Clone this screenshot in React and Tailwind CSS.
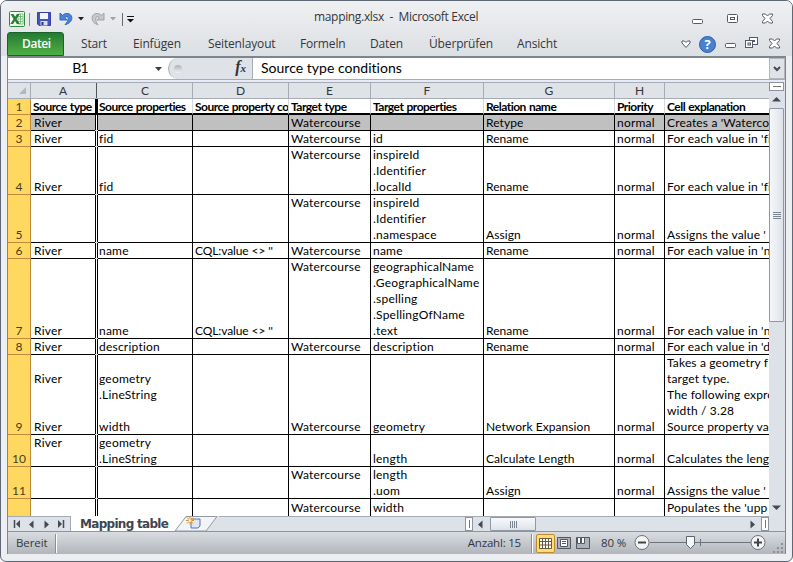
import React from "react";

const COLS = [
  ["A", "w-[64px]"],
  ["C", "w-[95px]"],
  ["D", "w-[96px]"],
  ["E", "w-[82px]"],
  ["F", "w-[113px]"],
  ["G", "w-[131px]"],
  ["H", "w-[50px]"],
  ["", "w-[104px]"],
];

const W = "Watercourse";
const ROWS = [
  { n: "2", h: "h-[16px]", gray: true, c: ["River", "", "", W, "", "Retype", "normal", "Creates a 'Waterco"] },
  { n: "3", h: "h-[16px]", c: ["River", "fid", "", W, "id", "Rename", "normal", "For each value in 'fid'"] },
  { n: "4", h: "h-[48px]", c: ["River", "fid", "", W + "\n\n ", "inspireId\n.Identifier\n.localId", "Rename", "normal", "For each value in 'fid'"] },
  { n: "5", h: "h-[48px]", c: ["", "", "", W + "\n\n ", "inspireId\n.Identifier\n.namespace", "Assign", "normal", "Assigns the value '"] },
  { n: "6", h: "h-[16px]", c: ["River", "name", "CQL:value <> ''", W, "name", "Rename", "normal", "For each value in 'name'"] },
  { n: "7", h: "h-[80px]", c: ["River", "name", "CQL:value <> ''", W + "\n\n\n\n ", "geographicalName\n.GeographicalName\n.spelling\n.SpellingOfName\n.text", "Rename", "normal", "For each value in 'name'"] },
  { n: "8", h: "h-[16px]", c: ["River", "description", "", W, "description", "Rename", "normal", "For each value in 'description'"] },
  { n: "9", h: "h-[80px]", c: ["River\n\n\nRiver", "geometry\n.LineString\n\nwidth", "", W, "geometry", "Network Expansion", "normal", "Takes a geometry f\ntarget type.\nThe following expression\nwidth / 3.28\nSource property var"] },
  { n: "10", h: "h-[32px]", c: ["River\n ", "geometry\n.LineString", "", "", "length", "Calculate Length", "normal", "Calculates the leng"] },
  { n: "11", h: "h-[32px]", c: ["", "", "", W + "\n ", "length\n.uom", "Assign", "normal", "Assigns the value '"] },
  { n: "", h: "h-[17px]", last: true, c: ["", "", "", W, "width", "", "", "Populates the 'upp"] },
];

const HEADS = ["Source type", "Source properties", "Source property conditions", "Target type", "Target properties", "Relation name", "Priority", "Cell explanation"];

function cellPad(i) {
  if (i === 0) return "pl-[3px]";
  if (i === 1) return "pl-[1px]";
  return "pl-[2px]";
}

function cellSpacing(i) {
  if (i === 2) return "tracking-[-0.1px]";
  if (i === 5) return "tracking-[0.06px]";
  if (i === 7) return "tracking-[0.15px]";
  return "tracking-[0.22px]";
}

function Row({ row }) {
  const line = row.last ? "" : "border-b border-b-black";
  return (
    <div className={`flex shrink-0 ${row.h}`}>
      <div className={`flex w-[23px] shrink-0 items-end justify-center border-r border-[#c08a3c] bg-[#ffd95f] text-[12px] leading-[15px] text-[#4a3c20] ${row.last ? "" : "border-b"}`}>{row.n}</div>
      {COLS.map(([, w], i) => (
        <React.Fragment key={i}>
          <div className={`flex shrink-0 items-end overflow-hidden ${w} ${line} ${cellPad(i)} ${i > 0 && i < 7 ? "border-r border-r-black" : ""} ${row.gray ? "bg-[#c0c0c0]" : "bg-white"}`}>
            <div className={`whitespace-pre text-[12px] leading-[16px] ${cellSpacing(i)} ${row.last ? "" : "-mb-px"}`}>{row.c[i]}</div>
          </div>
          {i === 0 && <div className={`w-[3px] shrink-0 border-x border-black bg-white ${row.last ? "" : "mb-px"}`} />}
        </React.Fragment>
      ))}
    </div>
  );
}

function ExcelLogo() {
  return (
    <svg width="16" height="16" viewBox="0 0 16 16">
      <rect x=".5" y=".5" width="15" height="15" rx="1" fill="#f3f8f0" stroke="#2f8a3b" />
      <path d="M9 3h5v10H9z" fill="#fff" stroke="#5ba85e" strokeWidth=".7" />
      <path d="M9 5.500h5M9 8h5M9 10.500h5M11.500 3v10" stroke="#5ba85e" strokeWidth=".7" />
      <path d="M1.500 3h3l1.600 2.800L7.900 3h2.800L7.600 8l3.300 5H7.800L6 10l-1.900 3H1.300l3.200-5z" fill="#2b7f36" />
    </svg>
  );
}

const Close = ({ className = "" }) => (
  <svg width="13" height="11" viewBox="0 0 13 11" className={className}>
    <path d="M1.500 1h3l2 2 2-2h3v1.500L9 5.500l2.500 3V10h-3l-2-2-2 2h-3V8.500L4 5.500 1.500 2.500z" fill="#fff" stroke="#555b66" />
  </svg>
);
const Minus = () => (
  <svg width="11" height="5" viewBox="0 0 11 5"><rect x=".5" y=".5" width="10" height="4" rx="1" fill="#fff" stroke="#555b66" /></svg>
);
const Tri = ({ d, className = "" }) => (
  <svg width="9" height="9" viewBox="0 0 9 9" className={className}><path d={d} fill="currentColor" /></svg>
);
const LEFT = "M6.500 .5v8L2 4.500z";
const RIGHT = "M2.500 .5v8L7 4.500z";
const DOWN = "M0 2.500h9L4.500 7z";
const UP = "M0 6.500h9L4.500 2z";

function TitleBar() {
  return (
    <div className="flex h-[31px] shrink-0 items-start pl-[2px] pt-[10px] text-[#33373d]">
      <div className="flex w-[305px] shrink-0 items-center">
        <ExcelLogo />
        <div className="ml-[4px] h-[13px] w-px bg-[#8b9097]" />
        <svg className="ml-[7px]" width="14" height="14" viewBox="0 0 14 14">
          <path d="M.5 .5h13v13H2L.5 12z" fill="#4354bd" stroke="#3542a0" />
          <path d="M3 1h8v6H3z" fill="#f4f6fc" /><path d="M3.500 9h7v4.500h-7z" fill="#d8dcec" /><path d="M4.500 10h2v3h-2z" fill="#27327c" />
        </svg>
        <svg className="ml-[8px]" width="14" height="14" viewBox="0 0 14 14">
          <path d="M1 1v7h7L5.800 5.500C7.500 4 9.200 4.500 9.200 6.500c0 2-1.200 4-3.200 6.200C11 11.500 13.200 8.500 12.800 5.200 12 1 6.500.3 3.500 3.300z" fill="#4a83dc" stroke="#3468bd" strokeWidth="1" />
        </svg>
        <svg className="ml-[5px]" width="6" height="4"><path d="M0 0h6L3 3.500z" fill="#222" /></svg>
        <svg className="ml-[7px]" width="14" height="14" viewBox="0 0 14 14">
          <path d="M13 1v7H6l2.200-2.500C6.500 4 4.800 4.500 4.800 6.500c0 2 .2 4 2.200 6.200C2.500 11.500.8 8.500 1.200 5.200 2 1 7.500.3 10.500 3.300z" fill="#c6c8ca" stroke="#a0a4a8" strokeWidth="1" />
        </svg>
        <svg className="ml-[5px]" width="6" height="4"><path d="M0 0h6L3 3.500z" fill="#a0a3a7" /></svg>
        <div className="ml-[6px] h-[13px] w-px bg-[#666b72]" />
        <svg className="ml-[4px]" width="7" height="8"><path d="M0 1.500h7" stroke="#111" /><path d="M0 4h7L3.500 7.500z" fill="#111" /></svg>
      </div>
      <div className="-mt-[2px] w-[376px] shrink-0 whitespace-pre font-['Open_Sans',sans-serif] text-[12px] leading-[16px] tracking-[-0.33px]">mapping.xlsx  -  Microsoft Excel</div>
      <div className="flex items-center pl-[2px] pt-[3px]">
        <div className="pt-[4px]"><Minus /></div>
        <svg className="ml-[24px]" width="11" height="10" viewBox="0 0 11 10"><rect x=".5" y=".5" width="10" height="8" rx="1" fill="#fff" stroke="#555b66" /><rect x="3.500" y="3.500" width="4" height="2" fill="#fff" stroke="#555b66" /></svg>
        <Close className="ml-[23px] -mt-[2px]" />
      </div>
    </div>
  );
}

function Ribbon() {
  return (
    <div className="flex h-[24px] shrink-0 font-['Open_Sans',sans-serif] text-[12px] leading-[24px] tracking-[-0.15px] text-[#33373d]">
      <div className="mr-[17px] w-[57px] rounded-t-[3px] border border-[#19622a] bg-linear-to-b from-[#257b32] to-[#4eb046] pl-[14px] font-semibold leading-[22px] tracking-[-0.4px] text-white">Datei</div>
      <div className="flex">
        <div className="w-[52px]">Start</div>
        <div className="w-[75px]">Einfügen</div>
        <div className="w-[92px]">Seitenlayout</div>
        <div className="w-[70px]">Formeln</div>
        <div className="w-[59px]">Daten</div>
        <div className="w-[88px]">Überprüfen</div>
        <div className="w-[164px]">Ansicht</div>
      </div>
      <div className="flex items-center">
        <svg width="10" height="9" viewBox="0 0 10 9"><path d="M1 1h2.500L5 2.500 6.500 1H9v2L5 7.500 1 3z" fill="#fff" stroke="#555b66" /></svg>
        <div className="ml-[8px] flex size-[17px] items-center justify-center rounded-full border border-[#2e5ea8] bg-[#4a80d0] text-[13px] font-bold text-white">?</div>
        <div className="ml-[9px] pt-[3px] leading-none"><Minus /></div>
        <svg className="ml-[9px] -mt-[2px]" width="13" height="12" viewBox="0 0 13 12"><rect x="4.500" y=".5" width="8" height="7" fill="#fff" stroke="#555b66" /><rect x="7.500" y="3.500" width="2" height="1" fill="#fff" stroke="#555b66" /><rect x=".5" y="3.500" width="7" height="7" fill="#fff" stroke="#555b66" /><rect x="3" y="6" width="2.500" height="2" fill="#fff" stroke="#555b66" /></svg>
        <Close className="ml-[10px] -mt-[2px]" />
      </div>
    </div>
  );
}

function FormulaBar() {
  return (
    <div className="flex h-[22px] shrink-0 border-b border-[#a6acb4] bg-white text-[14px] leading-[20px]">
      <div className="flex w-[160px] items-center justify-end">
        <span className="mr-[66px] -mt-px tracking-[-0.7px]">B1</span>
        <Tri d="M1 3h7L4.500 7z" className="mr-[5px] text-[#3a3e45]" />
      </div>
      <div className="flex w-[84px] items-center justify-between rounded-l-[11px] border-l border-[#a6acb4] bg-[#dfe2e7] pl-[5px] pr-[6px]">
        <div className="size-[8px] rounded-full bg-linear-to-b from-[#adb2b9] to-[#f0f2f4]" />
        <span className="-mt-[2px] font-['Liberation_Serif',serif] text-[16px] font-bold italic text-[#333]">f<span className="text-[11px]">x</span></span>
      </div>
      <div className="flex-1 border-l border-[#a6acb4] pl-[8px]"><span className="tracking-[0.02px]">Source type conditions</span></div>
      <div className="flex w-[16px] items-center justify-center border border-[#b2b7be] bg-[#dfe2e7] text-[#454a52]">
        <svg width="8" height="6"><path d="M1 1l3 3 3-3" fill="none" stroke="currentColor" strokeWidth="2" /></svg>
      </div>
    </div>
  );
}

function Sheet() {
  return (
    <div className="flex h-[434px] shrink-0">
      <div className="flex w-[761px] flex-col overflow-hidden">
        <div className="flex h-[17px] shrink-0 border-t border-b border-[#a6acb4] bg-[#dfe2e7] text-[12px] leading-[16px] text-[#33373d]">
          <div className="flex w-[23px] shrink-0 items-end justify-end border-r border-[#a6acb4] p-[4px]"><svg width="7" height="7"><path d="M7 0v7H0z" fill="#b3b8c0" /></svg></div>
          {COLS.map(([l, w], i) => (
            <React.Fragment key={i}>
              <div className={`shrink-0 text-center ${w} ${i && i < 7 ? "border-r border-[#a6acb4]" : ""}`}>{l}</div>
              {i === 0 && <div className="flex w-[3px] shrink-0 justify-center"><div className="w-px bg-[#50555c]" /></div>}
            </React.Fragment>
          ))}
        </div>
        <div className="flex h-[16px] shrink-0">
          <div className="w-[23px] shrink-0 border-r border-b border-[#c08a3c] bg-[#ffd95f] text-center text-[12px] leading-[16px] text-[#4a3c20]">1</div>
          {COLS.map(([, w], i) => (
            <React.Fragment key={i}>
              <div className={`shrink-0 overflow-hidden border-b-2 border-b-black bg-white whitespace-nowrap text-[12px] font-bold leading-[16px] tracking-[-0.5px] [word-spacing:0.7px] ${w} ${i === 1 ? "pl-[1px]" : "pl-[2px]"} ${i && i < 7 ? "border-r border-r-[#d4d7dc]" : ""}`}>{HEADS[i]}</div>
              {i === 0 && <div className="w-[3px] shrink-0 bg-black" />}
            </React.Fragment>
          ))}
        </div>
        {ROWS.map((r, i) => <Row key={i} row={r} />)}
      </div>
      <div className="flex w-[15px] flex-col items-center bg-[#dde1e8] text-[#454a52]">
        <div className="flex h-[9px] w-full items-center justify-center border border-[#8e949d] bg-white"><div className="h-px w-[8px] bg-[#777]" /></div>
        <div className="flex h-[17px] items-center"><Tri d={UP} /></div>
        <div className="flex h-[214px] w-[15px] items-center justify-center rounded-[1px] border border-[#8e98a6] bg-linear-to-r from-[#f5f7fa] to-[#dfe3e9]">
          <div className="flex flex-col gap-px"><i className="h-px w-[8px] bg-[#7d8590]" /><i className="h-px w-[8px] bg-[#7d8590]" /><i className="h-px w-[8px] bg-[#7d8590]" /><i className="h-px w-[8px] bg-[#7d8590]" /></div>
        </div>
        <div className="mt-auto mb-[4px]"><Tri d={DOWN} /></div>
      </div>
    </div>
  );
}

function TabStrip() {
  return (
    <div className="flex h-[16px] shrink-0 items-stretch border-b border-[#8e949d] bg-[#dde1e8] text-[#454a52]">
      <div className="flex w-[63px] items-center justify-between border-t border-r border-[#a6acb4] pl-[5px] pr-[5px]">
        <svg width="8" height="8"><path d="M1.500 0v8" stroke="currentColor" strokeWidth="1.500" /><path d="M7 0v8L3 4z" fill="currentColor" /></svg>
        <Tri d={LEFT} /><Tri d={RIGHT} />
        <svg width="8" height="8"><path d="M6.500 0v8" stroke="currentColor" strokeWidth="1.500" /><path d="M1 0v8l4-4z" fill="currentColor" /></svg>
      </div>
      <div className="w-[102px] bg-white pl-[9px] font-['DejaVu_Sans',sans-serif] text-[12px] font-bold leading-[16px] tracking-[-0.7px] whitespace-nowrap text-[#404650]">Mapping table</div>
      <svg width="46" height="16" viewBox="0 0 46 16">
        <path d="M0 0h13L2 15H0z" fill="#fff" /><path d="M2 15L13 .5h31L33 15z" fill="#f2f4f7" stroke="#9299a3" />
        <path d="M18 3h9v7l-2 2h-7z" fill="#dce8fa" stroke="#5872a5" /><path d="M13 4.500h8M17 .5v8M14 1.500l6 6M20 1.500l-6 6" stroke="#e28a18" /><circle cx="17" cy="4.500" r="1.500" fill="#fff4bd" />
      </svg>
      <div className="flex-1 border-t border-[#a6acb4]" />
      <div className="flex w-[304px] items-center border-t border-[#a6acb4]">
        <div className="flex h-[14px] w-[8px] items-center justify-center border border-[#8e949d] bg-white"><i className="h-[8px] w-px bg-[#777]" /></div>
        <Tri d={LEFT} className="ml-[3px]" />
        <div className="ml-[5px] flex h-[14px] w-[46px] items-center justify-center gap-px rounded-[1px] border border-[#8e98a6] bg-linear-to-b from-[#f7f9fb] to-[#dfe3e9]"><i className="h-[7px] w-px bg-[#7d8590]" /><i className="h-[7px] w-px bg-[#7d8590]" /><i className="h-[7px] w-px bg-[#7d8590]" /><i className="h-[7px] w-px bg-[#7d8590]" /></div>
        <Tri d={RIGHT} className="ml-auto" />
        <div className="ml-[4px] flex h-[14px] w-[8px] items-center justify-center border border-[#8e949d] bg-white"><i className="h-[8px] w-px bg-[#777]" /></div>
      </div>
      <div className="w-[16px]" />
    </div>
  );
}

function StatusBar() {
  return (
    <div className="flex h-[22px] shrink-0 items-center bg-linear-to-b from-[#d9dce0] to-[#b2b6bc] font-['Open_Sans',sans-serif] text-[11.500px] tracking-[-0.1px] text-[#33373d]">
      <div className="w-[47px] pl-[8px]">Bereit</div>
      <div className="h-[19px] w-[2px] border-l border-[#8a8f96] bg-white" />
      <div className="ml-auto whitespace-nowrap tracking-[-0.2px]">Anzahl: 15</div>
      <div className="ml-[10px] h-[19px] w-[2px] border-l border-[#8a8f96] bg-white" />
      <div className="ml-[3px] flex h-[19px] w-[19px] items-center justify-center rounded-[2px] border border-[#c28a30] bg-[#ffdf74]">
        <svg width="13" height="11"><path d="M.5 .5h12v10H.5zM.5 3.500h12M.5 7h12M3.500.5v10M6.500.5v10M9.500.5v10" fill="#fff" stroke="#685b3b" /></svg>
      </div>
      <svg className="ml-[2px]" width="14" height="12"><path d="M.5 .5h13v11H.5z" fill="#aeb2b8" stroke="#53575e" /><path d="M3.500 2.500h7v7h-7z" fill="#fff" stroke="#53575e" /><path d="M5 4.500h4M5 6.500h4" stroke="#53575e" /></svg>
      <svg className="ml-[5px]" width="14" height="12"><path d="M.5 .5h13v11H.5z" fill="#aeb2b8" stroke="#53575e" /><path d="M1.500 .5h3v6h-3zM5.500 .5h3v6h-3z" fill="#fff" stroke="#53575e" /></svg>
      <div className="ml-[11px] w-[33px] whitespace-nowrap">80 %</div>
      <svg width="132" height="18" viewBox="0 0 132 18">
        <path d="M16 8.500h102M66.500 5v7" stroke="#6d737b" />
        <circle cx="8" cy="8.500" r="7" fill="#f3f4f6" stroke="#6d737b" /><path d="M4 8.500h8" stroke="#444" strokeWidth="2" />
        <circle cx="124" cy="8.500" r="7" fill="#f3f4f6" stroke="#6d737b" /><path d="M120 8.500h8M124 4.500v8" stroke="#444" strokeWidth="2" />
        <path d="M52.500 2.500h8v8l-4 4-4-4z" fill="#f7f8f9" stroke="#5d636b" />
      </svg>
      <svg className="ml-[7px] self-end" width="12" height="12"><path d="M8 1h2v2H8zM8 5h2v2H8zM4 5h2v2H4zM8 9h2v2H8zM4 9h2v2H4zM0 9h2v2H0z" fill="#8a9098" /></svg>
    </div>
  );
}

export default function App() {
  return (
    <div className="h-[562px] w-[793px] overflow-hidden bg-white font-['Lato',sans-serif] text-black">
      <div className="flex h-[562px] w-[793px] flex-col rounded-t-[7px] rounded-b-[6px] border border-[#5f6874] bg-[#eceef1] px-[6px]">
        <div className="-mx-[6px] flex shrink-0 flex-col rounded-t-[6px] bg-linear-to-b from-[#eff0f2] to-[#dcdfe3] px-[6px]">
          <TitleBar />
          <Ribbon />
        </div>
        <div className="flex h-[498px] shrink-0 flex-col border border-t-2 border-[#7d858f] bg-[#dde1e8]">
          <FormulaBar />
          <div className="h-[2px] shrink-0 bg-[#e8ebf7]" />
          <Sheet />
          <TabStrip />
          <StatusBar />
        </div>
      </div>
    </div>
  );
}
